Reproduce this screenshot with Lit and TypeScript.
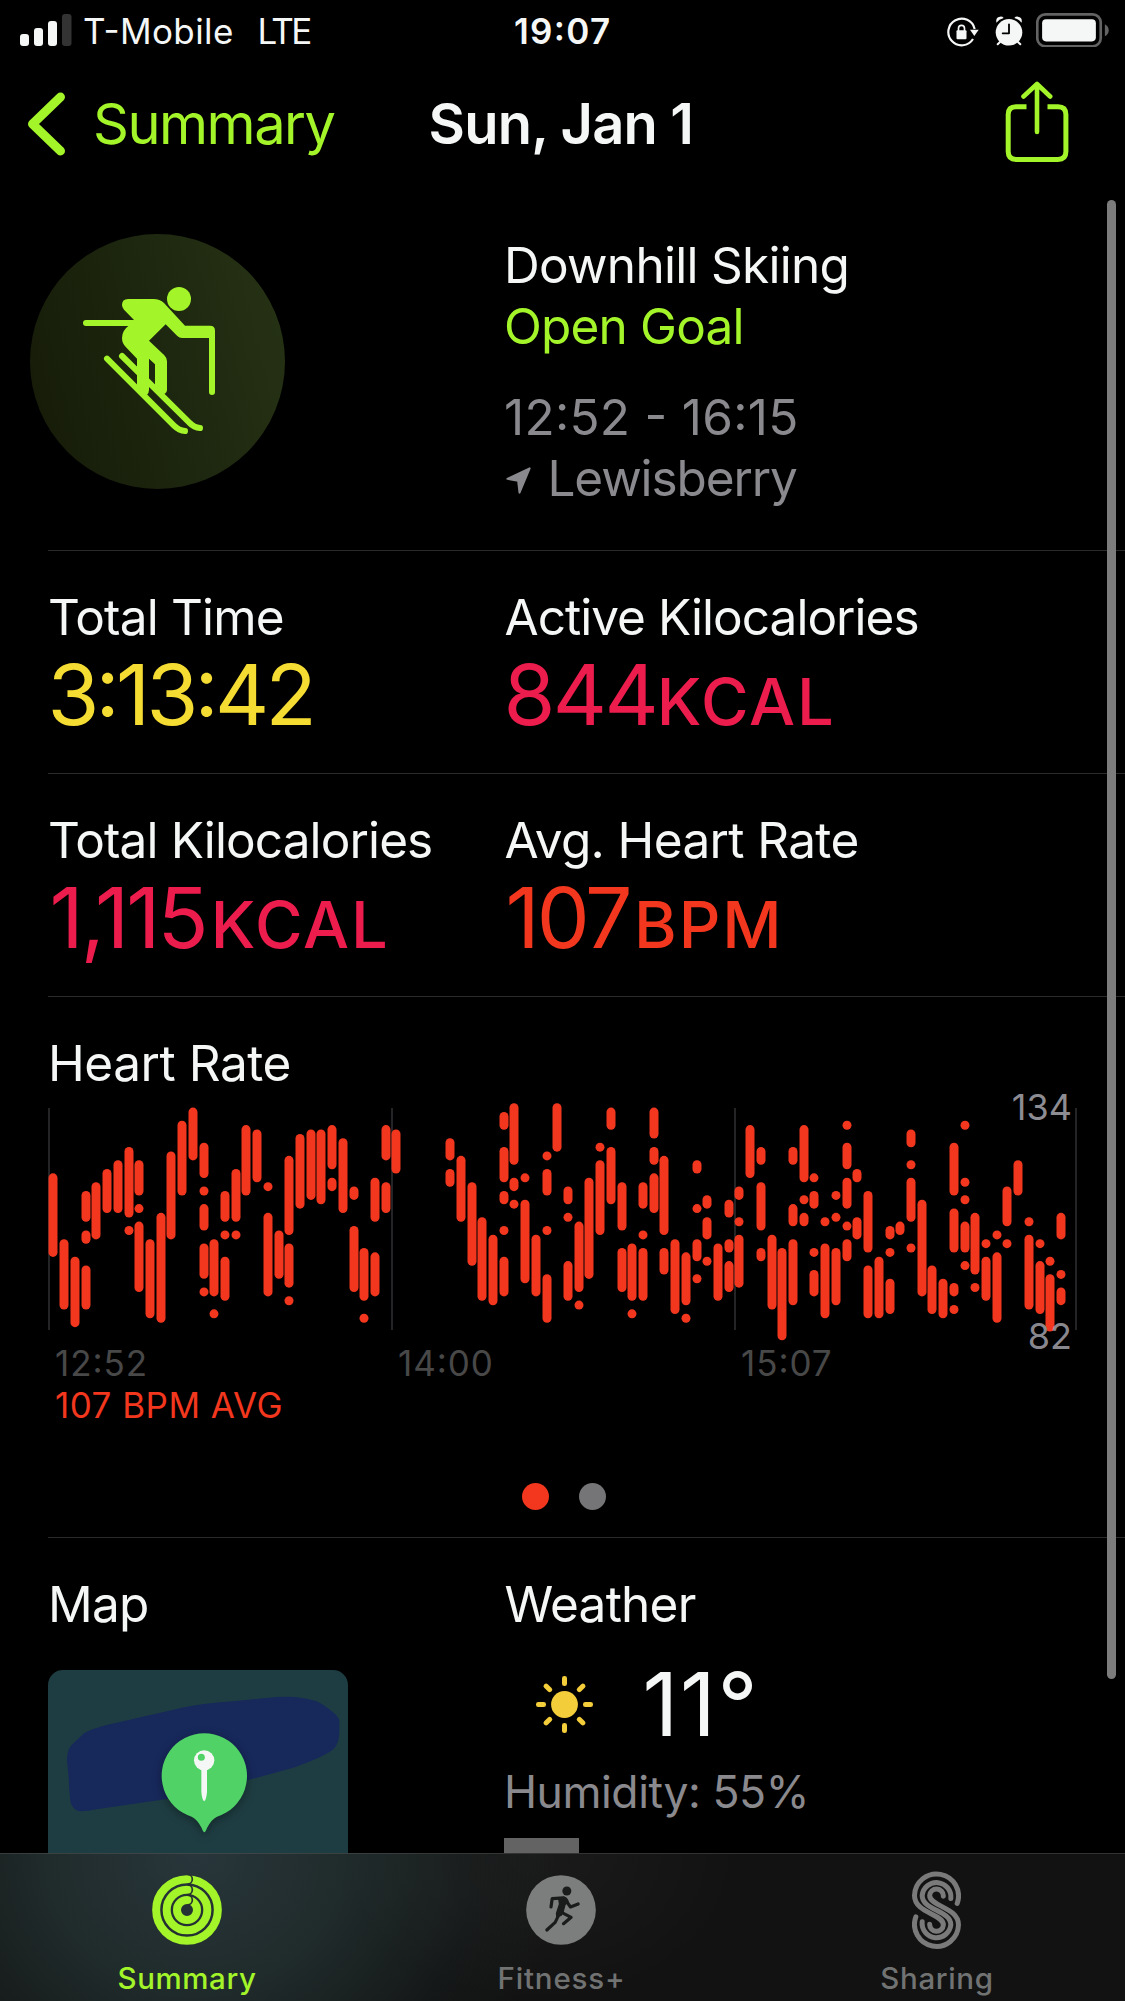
import { LitElement, html, svg, css } from "lit";
import { customElement } from "lit/decorators.js";

/* Heart-rate ranges: [time slot, highest bpm, lowest bpm, ...more ranges].
   Values are counted down from the axis maximum of 134 bpm. */
const HEART_RATE: number[][] = [
  [0, 16, 33], [1, 31, 45], [2, 35, 49], [3, 20, 25, 29, 30, 37, 45], [4, 18, 29], [5, 15, 23],
  [6, 13, 23], [7, 10, 24, 28, 28], [8, 13, 19, 23, 23, 27, 41], [9, 31, 47], [10, 25, 48],
  [11, 11, 29], [12, 4, 19], [13, 1, 11], [14, 9, 15, 19, 19, 23, 27, 32, 38, 42, 42],
  [15, 31, 42, 47, 47], [16, 20, 25, 29, 29, 35, 43], [17, 15, 25, 29, 29], [18, 5, 19], [19, 6, 16],
  [20, 18, 18, 25, 42], [21, 29, 38], [22, 12, 28, 32, 40, 44, 44], [23, 7, 22], [24, 6, 20],
  [25, 6, 21], [26, 5, 13, 17, 18], [27, 8, 23], [28, 19, 20, 28, 41], [29, 33, 43, 48, 48],
  [30, 17, 25, 34, 42], [31, 5, 11, 18, 23], [32, 6, 14],
  [37, 8, 11, 15, 17], [38, 12, 25], [39, 18, 35], [40, 26, 43], [41, 30, 44],
  [42, 2, 4, 10, 16, 20, 21, 28, 28, 35, 42], [43, 0, 12, 17, 18, 22, 22], [44, 16, 16, 22, 39],
  [45, 30, 42], [46, 11, 11, 15, 19, 28, 28, 39, 48], [47, 0, 9], [48, 19, 21, 25, 25, 36, 43],
  [49, 27, 41, 45, 45], [50, 17, 38], [51, 9, 9, 13, 28], [52, 1, 4, 10, 21], [53, 18, 27, 33, 41],
  [54, 32, 43, 47, 47], [55, 18, 22, 29, 29, 33, 43], [56, 1, 6, 10, 12, 16, 23], [57, 12, 28, 33, 37],
  [58, 31, 46], [59, 34, 44, 48, 48], [60, 13, 14, 23, 23, 31, 34, 39, 39], [61, 21, 22, 26, 29, 35, 35],
  [62, 32, 43], [63, 22, 24, 31, 32, 36, 41], [64, 19, 20, 26, 26, 30, 40], [65, 5, 15],
  [66, 10, 12, 18, 27, 33, 34], [67, 30, 45], [68, 33, 52], [69, 10, 12, 23, 26, 31, 44],
  [70, 5, 16, 21, 21, 25, 26], [71, 16, 16, 20, 22, 33, 33, 38, 42], [72, 26, 26, 32, 47],
  [73, 20, 20, 25, 25, 33, 44], [74, 4, 4, 9, 13, 17, 22, 27, 27, 31, 34], [75, 15, 16, 26, 29],
  [76, 20, 32, 37, 47], [77, 35, 47], [78, 28, 29, 33, 33, 40, 46], [79, 27, 28],
  [80, 6, 8, 13, 13, 17, 25, 32, 32], [81, 22, 42], [82, 37, 46], [83, 40, 47],
  [84, 9, 19, 24, 32, 41, 42, 46, 46], [85, 4, 4, 17, 17, 21, 21, 27, 32, 36, 36], [86, 25, 37, 41, 41],
  [87, 31, 31, 35, 43], [88, 29, 29, 34, 48], [89, 19, 26, 31, 31], [90, 13, 19], [91, 26, 26, 30, 45],
  [92, 31, 31, 36, 46], [93, 35, 35, 39, 50], [94, 25, 29, 38, 38, 42, 44],
];

@customElement("heart-chart")
export class HeartChart extends LitElement {
  static styles = css`
    :host { display: block; position: relative; height: 251px; }
    svg { display: block; width: 1030px; height: 251px; overflow: visible; }
    .grid { fill: #242426; }
    .bar { fill: #f2371e; }
    .axis { position: absolute; right: 6px; font-size: 36px; line-height: 44px; color: #8d8c92; }
    .max { top: -6px; }
    .min { top: 223px; color: rgba(157, 155, 163, 0.9); }
  `;
  render() {
    const bars = HEART_RATE.flatMap(([slot, ...r]) => {
      const x = Math.ceil(slot * 10.718) + 0.5;
      const out = [];
      for (let i = 0; i < r.length; i += 2) {
        const top = 16.67 + r[i] * 4.387 - 4.5;
        const h = (r[i + 1] - r[i]) * 4.387 + 9;
        out.push(svg`<rect class="bar" x=${x} y=${top.toFixed(2)} width="9" height=${h.toFixed(2)} rx="4.5"></rect>`);
      }
      return out;
    });
    return html`
      <svg viewBox="0 0 1030 251">
        ${[0, 343, 686, 1027].map((x) => svg`<rect class="grid" x=${x} y="17" width="2" height="222"></rect>`)}
        ${bars}
      </svg>
      <span class="axis max">134</span>
      <span class="axis min">82</span>
    `;
  }
}

@customElement("status-bar")
export class StatusBar extends LitElement {
  static styles = css`
    :host { display: grid; grid-template-columns: 514px 1fr auto; height: 51px; padding: 10px 16px 0 0; font-size: 35px; line-height: 42px; }
    .carrier { display: flex; }
    .signal { width: 52px; height: 33px; margin: 3px 11px 0 20px; }
    .name { width: 174.5px; letter-spacing: 0.41px; }
    .net { letter-spacing: -2.6px; }
    .time { font-weight: 600; letter-spacing: 1.3px; }
    .icons { display: flex; }
    .lock { width: 32px; height: 30px; margin: 7px 15.5px 0 0; }
    .alarm { width: 28px; height: 30.6px; margin: 5.5px 13.5px 0 0; }
    .battery { width: 73px; height: 34.4px; margin-top: 2.8px; }
  `;
  render() {
    return html`
      <div class="carrier">
        <svg class="signal" viewBox="0 0 52 33" fill="#f5f7f6">
          <rect x="0" y="21" width="9" height="12" rx="3"></rect>
          <rect x="14" y="15" width="9" height="18" rx="3"></rect>
          <rect x="28" y="8" width="9" height="25" rx="3"></rect>
          <rect x="42" y="1" width="9.5" height="32" rx="3" fill="#333"></rect>
        </svg>
        <span class="name">T-Mobile</span><span class="net">LTE</span>
      </div>
      <div class="time">19:07</div>
      <div class="icons">
        <svg class="lock" viewBox="1035 50 96 90">
          <path d="M1113 116A40 40 0 1 1 1118 86" fill="none" stroke="#f5f7f6" stroke-width="6.5"></path>
          <path d="M1104 88H1130L1117 107Z" fill="#f5f7f6"></path>
          <rect x="1063.500" y="90" width="30" height="27" rx="3" fill="#f5f7f6"></rect>
          <path d="M1069.500 92V84a9 9 0 0 1 18 0V92" fill="none" stroke="#f5f7f6" stroke-width="5"></path>
        </svg>
        <svg class="alarm" viewBox="1178 46 84 92" fill="#f5f7f6">
          <circle cx="1220" cy="95" r="40"></circle>
          <path d="M1182 66Q1179 50 1193 48Q1200 47 1204 52Q1190 56 1182 66Z"></path>
          <path d="M1258 66Q1261 50 1247 48Q1240 47 1236 52Q1250 56 1258 66Z"></path>
          <path d="M1193 124L1186 131M1247 124L1254 131" stroke="#f5f7f6" stroke-width="6" stroke-linecap="round"></path>
          <path d="M1220 71V98H1201" fill="none" stroke="#000" stroke-width="5.500" stroke-linecap="round" stroke-linejoin="round"></path>
        </svg>
        <svg class="battery" viewBox="1302 38 218 103">
          <rect x="1305.500" y="42" width="190" height="95.500" rx="24" fill="none" stroke="#636363" stroke-width="8"></rect>
          <rect x="1320" y="57" width="161" height="66" rx="12" fill="#f5f7f6"></rect>
          <path d="M1508 72Q1519.500 78 1519.500 90Q1519.500 102 1508 108Z" fill="#636363"></path>
        </svg>
      </div>
    `;
  }
}

@customElement("nav-header")
export class NavHeader extends LitElement {
  static styles = css`
    :host { display: grid; grid-template-columns: 428.5px 1fr auto; align-items: center; height: 126px; padding-right: 56.5px; font-size: 56px; line-height: 68px; }
    .back { display: flex; align-items: center; padding-left: 28px; color: #a3f52a; }
    .chevron { width: 37px; height: 64px; margin-right: 28px; }
    .label { letter-spacing: -1.5px; }
    .title { font-weight: 600; letter-spacing: -0.77px; }
    .share { display: block; width: 64px; height: 82px; margin-top: -5px; }
  `;
  render() {
    return html`
      <div class="back">
        <svg class="chevron" viewBox="28 92.500 37 64" fill="none" stroke="#a3f52a" stroke-width="9" stroke-linecap="round" stroke-linejoin="round">
          <path d="M60.500 97.500L32.500 124.500L60.500 151.500"></path>
        </svg>
        <span class="label">Summary</span>
      </div>
      <div class="title">Sun, Jan 1</div>
      <svg class="share" viewBox="1004.500 81 64 82" fill="none" stroke="#a3f52a" stroke-width="5">
        <path d="M1026 106.700H1015.500Q1007.700 106.700 1007.700 114.500V151.500Q1007.700 159.400 1015.500 159.400H1057.500Q1065.400 159.400 1065.400 151.500V114.500Q1065.400 106.700 1057.500 106.700H1047"></path>
        <path d="M1036.500 132V84.500M1023 96.500L1036.500 84L1049.700 96.500" stroke-linecap="round" stroke-linejoin="round" stroke-width="4.600"></path>
      </svg>
    `;
  }
}

@customElement("tab-bar")
export class TabBar extends LitElement {
  static styles = css`
    :host {
      display: grid; grid-template-columns: 374px 374px 377px; box-sizing: border-box; height: 148px; padding-top: 17px;
      border-top: 1px solid rgba(255, 255, 255, 0.14);
      background:
        radial-gradient(ellipse 200px 150px at 540px 0, rgba(255, 255, 255, 0.035), transparent),
        radial-gradient(ellipse 330px 300px at 195px 0, #28363b 0%, #202b2b 45%, #151818 85%, rgba(18, 18, 18, 0) 110%),
        #121212;
      font-size: 29.5px; font-weight: 500; line-height: 36px; color: #717272;
    }
    .tab { display: flex; flex-direction: column; align-items: center; gap: 11px; }
    .on { color: #a3f52a; }
    .round { width: 70px; height: 78px; }
    .ess { width: 49px; height: 78px; }
    .a { letter-spacing: 0.6px; }
    .b { margin-left: 1px; letter-spacing: 0.83px; }
    .c { margin-left: 1px; letter-spacing: 0.65px; }
  `;
  render() {
    return html`
      <div class="tab on">
        <svg class="round" viewBox="455.500 693 210 234" fill="none">
          ${[92.5, 61, 30].map((r) => svg`
            <circle cx="560.500" cy="810" r=${r} stroke="#a3f52a" stroke-width="24"></circle>
            <path d=${`M562 ${810 - r - 14.5}A14.500 14.500 0 0 1 562 ${810 - r + 14.5}`} stroke="#25312f" stroke-width="5"></path>`)}
        </svg>
        <span class="a">Summary</span>
      </div>
      <div class="tab">
        <svg class="round" viewBox="317.500 693 210 234">
          <circle cx="422.500" cy="810" r="104.500" fill="#7c7d7d"></circle>
          <circle cx="440" cy="753" r="13.500" fill="#1a1b1b"></circle>
          <g fill="none" stroke="#1a1b1b" stroke-width="9.500" stroke-linecap="round" stroke-linejoin="round">
            <path d="M392.500 801L396 776L430 773.500"></path>
            <path d="M436 780L451 801L474 792"></path>
            <path d="M418 820L405 847L380 870"></path>
            <path d="M424 817L453 832L430 851"></path>
          </g>
          <path d="M413 772L434 770Q441 771 446 784L436 796L431 815L424 828L408 832L407 820L416 792Z" fill="#1a1b1b"></path>
        </svg>
        <span class="b">Fitness+</span>
      </div>
      <div class="tab">
        <svg class="ess" viewBox="395.500 693.500 147 234" fill="none" stroke="#7a7a7a" stroke-width="15" stroke-linecap="round">
          <path d="M531 791A66 66 0 1 0 403 767C403 820 489.500 822 489.500 855A20.500 20.500 0 0 1 448.500 853"></path>
          <path d="M512 776A43 43 0 1 0 426 767C426 812 512 810 512 855A43 43 0 1 1 426 846"></path>
          <path d="M489.500 769A20.500 20.500 0 0 0 448.500 767C448.500 800 535 802 535 855A66 66 0 1 1 407 831"></path>
        </svg>
        <span class="c">Sharing</span>
      </div>
    `;
  }
}

@customElement("app-root")
export class AppRoot extends LitElement {
  static styles = css`
    :host {
      display: flex; flex-direction: column; position: relative; width: 1125px; height: 2001px; overflow: hidden;
      background: #000; color: #f5f7f6; white-space: nowrap;
      font-family: Inter, "Liberation Sans", sans-serif; font-feature-settings: "calt" 1;
    }
    .content { flex: 1; min-height: 0; overflow: hidden; }
    .hero { display: grid; grid-template-columns: 474px 1fr; height: 363px; box-sizing: border-box; padding: 47px 0 0 30px; }
    .badge { width: 255px; height: 255px; border-radius: 50%; background: linear-gradient(75deg, #161c08 8%, #1d260f 50%, #263214 95%); }
    .badge svg { display: block; width: 255px; height: 255px; }
    .facts { display: flex; flex-direction: column; gap: 1px; padding-top: 1px; font-size: 49.5px; line-height: 60px; }
    .activity { letter-spacing: -0.72px; }
    .goal { color: #a3f52a; letter-spacing: -0.83px; }
    .when { margin-top: 30px; color: #8a898e; letter-spacing: 0.3px; }
    .where { display: flex; align-items: center; color: #8a898e; letter-spacing: -1.12px; }
    .arrow { width: 25px; height: 27px; margin: 4px 17px 0 1.5px; }

    .row { display: grid; grid-template-columns: 456.5px 1fr; box-sizing: border-box; height: 223px; margin-left: 48px; padding-top: 38px; border-top: 1px solid #2b2b2d; }
    .label { font-size: 49.5px; line-height: 56px; }
    .value { display: flex; align-items: baseline; font-size: 84px; line-height: 99px; }
    .unit { font-size: 65px; font-weight: 500; line-height: 65px; letter-spacing: 1.9px; }
    .yellow { color: #f5dc33; }
    .pink { color: #ec1c4d; }
    .red { color: #f2371e; }
    .l-time { letter-spacing: -0.83px; }
    .l-total { letter-spacing: -0.88px; }
    .l-active { letter-spacing: -0.97px; }
    .l-avg { letter-spacing: -0.63px; }
    .l-heart { letter-spacing: -0.45px; }
    .l-map { letter-spacing: -0.8px; }
    .l-weather { letter-spacing: -0.75px; }
    .v-time { margin-left: -0.5px; letter-spacing: -3.77px; }
    .v-active { margin-left: -1px; letter-spacing: -2.62px; }
    .v-total { margin-left: 1.5px; letter-spacing: -2.86px; }
    .v-avg { margin-left: 1px; letter-spacing: -3px; }
    .u-active { margin-left: 0.5px; }
    .u-total { margin-left: 5px; }
    .u-avg { margin-left: 4.5px; }

    .chart { box-sizing: border-box; height: 541px; margin-left: 48px; padding-top: 38px; border-top: 1px solid #2b2b2d; }
    heart-chart { width: 1030px; }
    .times { display: grid; grid-template-columns: 343px 343px 1fr; padding-left: 7px; font-size: 35px; line-height: 42px; color: #484848; letter-spacing: 0.95px; }
    .avg { padding-left: 7px; font-size: 35px; line-height: 42px; color: #f2371e; letter-spacing: 0.48px; }
    .pages { display: flex; gap: 30px; padding: 57px 0 0 473.5px; }
    .dot { width: 27px; height: 27px; border-radius: 50%; background: #757578; }
    .current { background: #f2371e; }

    .bottom { display: grid; grid-template-columns: 456.5px 1fr; margin-left: 48px; padding-top: 38px; border-top: 1px solid #2b2b2d; }
    .map { display: block; width: 300px; height: 300px; margin-top: 38px; border-radius: 15px; background: #1e3d42; }
    .pin { filter: drop-shadow(0 8px 14px rgba(0, 0, 0, 0.35)); }
    .weather { display: flex; align-items: center; height: 106px; margin-top: 19px; padding-left: 31px; font-size: 88px; line-height: 106px; }
    .sun { width: 57px; height: 57px; margin-right: 50px; }
    .temp { letter-spacing: 1.7px; }
    .humidity { margin: 8px 0 0 -0.5px; font-size: 44.5px; line-height: 54px; color: #8a898e; letter-spacing: -0.45px; }
    .source { width: 75px; height: 40px; margin: 19px 0 0 -0.5px; background: #636363; }
    .scrollbar { position: absolute; left: 1107px; top: 200px; width: 9px; height: 1479px; border-radius: 4.5px; background: #7c7c7c; }
  `;

  render() {
    return html`
      <status-bar></status-bar>
      <nav-header></nav-header>
      <main class="content">
        <section class="hero">
          <div class="badge">
            <svg viewBox="90 72 765 765" fill="#a3f52a">
              <circle cx="537" cy="267" r="36"></circle>
              <path d="M384 267H460Q480 267 492 279L555 347H630Q645 347 645 362V546A9 9 0 0 1 627 546V384H546Q538 384 532 378L497 343L447 392L493 436Q501 444 501 454V540Q501 548 494 552L465 535V463L447 446V540Q447 550 440 556L411 530V446L378 412Q366 400 366 384Q366 362 385 348L402 330L372 299Q366 292 366 285Q366 267 384 267Z"></path>
              <g fill="none" stroke="#a3f52a" stroke-width="18" stroke-linecap="round" stroke-linejoin="round">
                <path d="M258 339H400"></path>
                <path d="M321 446L522 647Q537 662 555 663"></path>
                <path d="M366 438L568 638Q582 653 600 654"></path>
              </g>
            </svg>
          </div>
          <div class="facts">
            <div class="activity">Downhill Skiing</div>
            <div class="goal">Open Goal</div>
            <div class="when">12:52 - 16:15</div>
            <div class="where">
              <svg class="arrow" viewBox="79 741 74 80" fill="#8a898e" stroke="#8a898e" stroke-width="6" stroke-linejoin="round">
                <path d="M83 776L149 745L119 817L115 782Z"></path>
              </svg>
              <span>Lewisberry</span>
            </div>
          </div>
        </section>

        <section class="row">
          <div>
            <div class="label l-time">Total Time</div>
            <div class="value yellow"><span class="v-time">3:13:42</span></div>
          </div>
          <div>
            <div class="label l-active">Active Kilocalories</div>
            <div class="value pink"><span class="v-active">844</span><span class="unit u-active">KCAL</span></div>
          </div>
        </section>

        <section class="row">
          <div>
            <div class="label l-total">Total Kilocalories</div>
            <div class="value pink"><span class="v-total">1,115</span><span class="unit u-total">KCAL</span></div>
          </div>
          <div>
            <div class="label l-avg">Avg. Heart Rate</div>
            <div class="value red"><span class="v-avg">107</span><span class="unit u-avg">BPM</span></div>
          </div>
        </section>

        <section class="chart">
          <div class="label l-heart">Heart Rate</div>
          <heart-chart></heart-chart>
          <div class="times"><span>12:52</span><span>14:00</span><span>15:07</span></div>
          <div class="avg">107 BPM AVG</div>
          <div class="pages"><span class="dot current"></span><span class="dot"></span></div>
        </section>

        <section class="bottom">
          <div>
            <div class="label l-map">Map</div>
            <svg class="map" viewBox="144 90 900 900">
              <path fill="#17285b" d="M252 280Q270 268 320 255L540 205Q600 190 700 184L830 171Q900 166 950 184Q975 196 1005 222Q1018 235 1018 245V275Q1018 310 1000 328Q970 352 880 383L741 421L500 477L290 508Q240 518 228 510Q214 500 211 482Q207 450 206 410L201 360Q201 330 215 315Z"></path>
              <g class="pin">
                <path fill="#50d266" d="M575 530A128 128 0 1 1 651 530Q634 538 621 564Q616 577 613 577Q610 577 605 564Q592 538 575 530Z"></path>
              </g>
              <circle cx="612.500" cy="361" r="30.500" fill="#f5f7f6"></circle>
              <path fill="#f5f7f6" d="M604 385H621V455Q619 480 612.500 484Q606 480 604 455Z"></path>
              <circle cx="604" cy="352" r="10.500" fill="#50d266"></circle>
            </svg>
          </div>
          <div>
            <div class="label l-weather">Weather</div>
            <div class="weather">
              <svg class="sun" viewBox="-28.500 -28.500 57 57" fill="#f4cd3a">
                <circle r="13.400"></circle>
                ${[0, 45, 90, 135, 180, 225, 270, 315].map((a) => svg`<rect x="18.500" y="-2.500" width="10" height="5" rx="2.300" transform=${`rotate(${a})`}></rect>`)}
              </svg>
              <span class="temp">11°</span>
            </div>
            <div class="humidity">Humidity: 55%</div>
            <div class="source"></div>
          </div>
        </section>
      </main>
      <tab-bar></tab-bar>
      <div class="scrollbar"></div>
    `;
  }
}
